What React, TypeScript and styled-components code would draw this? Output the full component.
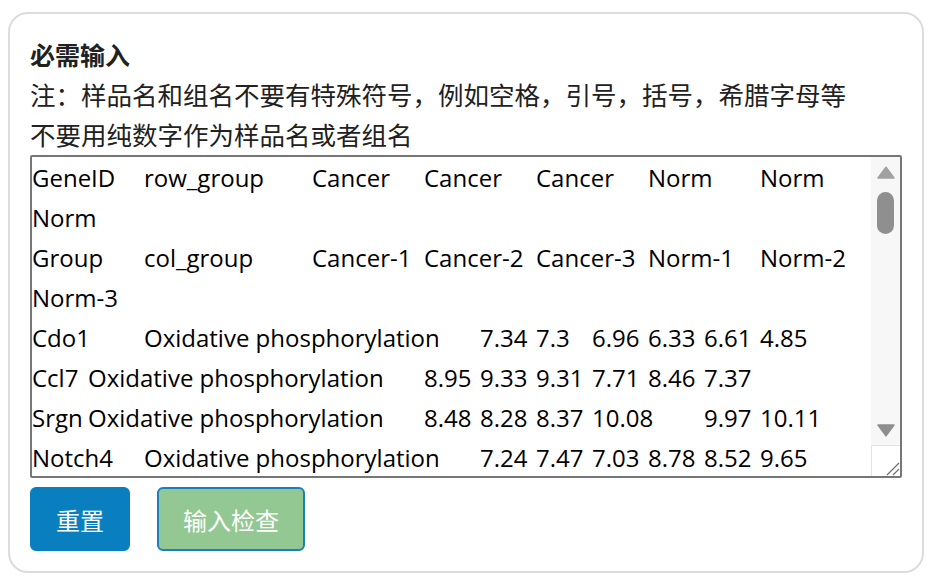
import { createGlobalStyle, styled } from "styled-components";

const GlobalStyle = createGlobalStyle`
	html, body {
		margin: 0;
		padding: 0;
		background: #ffffff;
	}
	body {
		padding: 12px 8px 10px;
		font-family: "Open Sans", "Noto Sans CJK SC", sans-serif;
		color: #212529;
	}
`;

const Card = styled.div`
	border: 2px solid #dcdcdc;
	border-radius: 20px;
	padding: 20px;
	display: flex;
	flex-direction: column;
`;

const Title = styled.div`
	font-family: "Noto Sans CJK SC", sans-serif;
	font-size: 25px;
	font-weight: 700;
	line-height: 40px;
	color: #212121;
`;

const Note = styled.div`
	font-family: "Noto Sans CJK SC", sans-serif;
	font-size: 25.5px;
	line-height: 40px;
	color: #212121;
`;

const Field = styled.div`
	position: relative;
	margin: 1px 0 9px;
`;

const DataInput = styled.textarea`
	display: block;
	box-sizing: border-box;
	width: 100%;
	height: 323px;
	margin: 0;
	padding: 1px 29px 0 0;
	border: 2px solid #767676;
	border-radius: 2px;
	font-family: "Open Sans", "Noto Sans CJK SC", sans-serif;
	font-size: 24px;
	line-height: 40px;
	color: #000;
	tab-size: 56px;
	white-space: pre-wrap;
	resize: vertical;
	outline: none;
	scrollbar-width: none;
`;

/* drawn scrollbar laid over the textarea's right edge */
const ScrollRail = styled.div`
	position: absolute;
	top: 2px;
	right: 2px;
	bottom: 2px;
	width: 29px;
	display: flex;
	flex-direction: column;
	background: #f7f7f7;
	pointer-events: none;
`;

const RailButton = styled.div`
	height: 30px;
	display: flex;
	justify-content: center;
	align-items: center;
	flex-shrink: 0;
`;

const Track = styled.div`
	flex: 1;
	padding: 5px 6px;
`;

const Thumb = styled.div`
	height: 42px;
	border-radius: 9px;
	background: #8f8f8f;
`;

const Corner = styled.div`
	height: 31px;
	flex-shrink: 0;
	box-sizing: border-box;
	background: #ffffff;
	border-top: 1px solid #e3e3e3;
	border-left: 1px solid #e3e3e3;
	display: flex;
	justify-content: flex-end;
	align-items: flex-end;
`;

const ButtonRow = styled.div`
	display: flex;
	gap: 27px;
`;

const ActionButton = styled.button<{ $variant: "primary" | "check" }>`
	box-sizing: border-box;
	height: 64px;
	padding: 0 24px;
	border-radius: 6px;
	font-family: "Noto Sans CJK SC", sans-serif;
	font-size: 24px;
	color: #ffffff;
	cursor: pointer;
	background: ${({ $variant }) => ($variant === "primary" ? "#0a7fbf" : "#93c893")};
	border: 2px solid ${({ $variant }) => ($variant === "primary" ? "#0a7fbf" : "#1a7fbe")};
`;

const header = [
	"GeneID\trow_group\tCancer\tCancer\tCancer\tNorm\tNorm\tNorm",
	"Group\tcol_group\tCancer-1\tCancer-2\tCancer-3\tNorm-1\tNorm-2\tNorm-3",
];

const rows: [string, string, number[]][] = [
	["Cdo1", "Oxidative phosphorylation", [7.34, 7.3, 6.96, 6.33, 6.61, 4.85]],
	["Ccl7", "Oxidative phosphorylation", [8.95, 9.33, 9.31, 7.71, 8.46, 7.37]],
	["Srgn", "Oxidative phosphorylation", [8.48, 8.28, 8.37, 10.08, 9.97, 10.11]],
	["Notch4", "Oxidative phosphorylation", [7.24, 7.47, 7.03, 8.78, 8.52, 9.65]],
	["Pdgfrb", "Oxidative phosphorylation", [6.12, 6.05, 6.4, 7.88, 7.61, 7.92]],
	["Cxcl12", "Oxidative phosphorylation", [9.11, 9.02, 8.87, 10.21, 10.05, 9.98]],
	["Ndufa4", "Oxidative phosphorylation", [10.4, 10.22, 10.31, 9.12, 9.3, 9.05]],
	["Cox7c", "Oxidative phosphorylation", [11.02, 10.95, 11.1, 10.01, 9.87, 9.94]],
	["Atp5b", "Oxidative phosphorylation", [10.88, 10.7, 10.65, 9.76, 9.81, 9.69]],
	["Sdhb", "Oxidative phosphorylation", [8.77, 8.69, 8.82, 7.95, 8.03, 7.88]],
	["Uqcrc1", "Oxidative phosphorylation", [9.45, 9.38, 9.51, 8.62, 8.7, 8.55]],
	["Cycs", "Oxidative phosphorylation", [9.9, 9.84, 9.77, 8.91, 8.96, 8.85]],
	["Tgfb1", "Cell cycle", [7.12, 7.25, 7.08, 8.34, 8.2, 8.41]],
	["Ccnb1", "Cell cycle", [9.62, 9.71, 9.55, 7.43, 7.51, 7.38]],
	["Cdk1", "Cell cycle", [8.93, 9.04, 8.88, 6.72, 6.8, 6.65]],
	["Mki67", "Cell cycle", [8.41, 8.53, 8.36, 6.14, 6.27, 6.09]],
	["Top2a", "Cell cycle", [9.15, 9.26, 9.09, 6.98, 7.05, 6.91]],
	["Bub1", "Cell cycle", [7.66, 7.74, 7.6, 5.88, 5.95, 5.81]],
	["Plk1", "Cell cycle", [8.02, 8.11, 7.97, 6.33, 6.4, 6.28]],
	["Aurka", "Cell cycle", [7.89, 7.95, 7.83, 6.21, 6.3, 6.17]],
	["Ccna2", "Cell cycle", [8.55, 8.62, 8.49, 6.77, 6.83, 6.7]],
	["Mcm2", "Cell cycle", [8.3, 8.38, 8.24, 7.01, 7.09, 6.96]],
	["Pcna", "Cell cycle", [9.74, 9.8, 9.69, 8.45, 8.52, 8.4]],
	["E2f1", "Cell cycle", [6.88, 6.95, 6.82, 5.61, 5.7, 5.55]],
	["Col1a1", "ECM receptor interaction", [11.2, 11.05, 11.31, 9.87, 9.92, 9.8]],
	["Col3a1", "ECM receptor interaction", [10.95, 10.81, 11.02, 9.6, 9.66, 9.52]],
	["Fn1", "ECM receptor interaction", [10.33, 10.2, 10.41, 9.02, 9.1, 8.97]],
	["Itgb1", "ECM receptor interaction", [9.58, 9.49, 9.64, 8.77, 8.82, 8.7]],
	["Lamb1", "ECM receptor interaction", [8.21, 8.14, 8.29, 7.45, 7.5, 7.4]],
	["Sdc1", "ECM receptor interaction", [7.93, 7.86, 8.0, 7.12, 7.2, 7.06]],
	["Cd44", "ECM receptor interaction", [9.07, 8.99, 9.14, 8.21, 8.28, 8.15]],
	["Spp1", "ECM receptor interaction", [10.6, 10.48, 10.7, 8.34, 8.41, 8.29]],
	["Thbs1", "ECM receptor interaction", [8.66, 8.58, 8.73, 7.81, 7.88, 7.75]],
	["Vtn", "ECM receptor interaction", [6.45, 6.38, 6.52, 7.9, 7.96, 7.84]],
];

const sampleData = [
	...header,
	...rows.map(([gene, group, values]) => [gene, group, ...values.map(String)].join("\t")),
].join("\n");

export default function App() {
	return (
		<>
			<GlobalStyle />
			<Card>
				<Title>必需输入</Title>
				<Note>注：样品名和组名不要有特殊符号，例如空格，引号，括号，希腊字母等</Note>
				<Note>不要用纯数字作为样品名或者组名</Note>
				<Field>
					<DataInput defaultValue={sampleData} spellCheck={false} />
					<ScrollRail>
						<RailButton>
							<svg width="18" height="13" viewBox="0 0 18 13">
								<path d="M9 1.2 L17 12 H1 Z" fill="#a1a1a1" stroke="#a1a1a1" strokeWidth="1.5" strokeLinejoin="round" />
							</svg>
						</RailButton>
						<Track>
							<Thumb />
						</Track>
						<RailButton>
							<svg width="18" height="13" viewBox="0 0 18 13">
								<path d="M1 1 H17 L9 11.8 Z" fill="#8f8f8f" stroke="#8f8f8f" strokeWidth="1.5" strokeLinejoin="round" />
							</svg>
						</RailButton>
						<Corner>
							<svg width="16" height="16" viewBox="0 0 16 16">
								<path d="M3 15 L15 3 M9 15 L15 9" stroke="#6f6f6f" strokeWidth="1.2" />
							</svg>
						</Corner>
					</ScrollRail>
				</Field>
				<ButtonRow>
					<ActionButton $variant="primary">重置</ActionButton>
					<ActionButton $variant="check">输入检查</ActionButton>
				</ButtonRow>
			</Card>
		</>
	);
}
